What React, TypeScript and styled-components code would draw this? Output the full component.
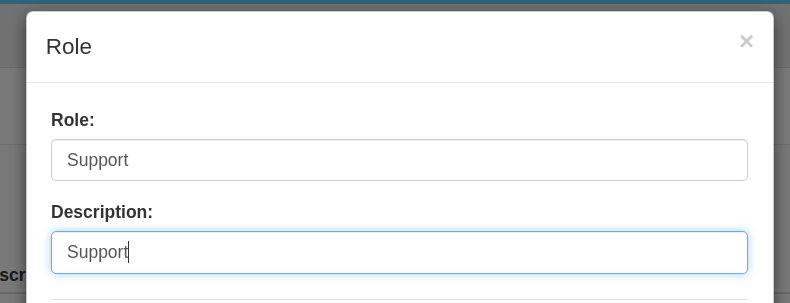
import React from 'react';
import styled, { createGlobalStyle } from 'styled-components';

// Bootstrap 3 look, rendered at 125% zoom
const theme = {
  text: '#333',
  border: '#ccc',
  focus: '#66afe9',
  rule: '#e5e5e5',
  font: '"Liberation Sans", Arial, Helvetica, sans-serif',
};

const GlobalStyle = createGlobalStyle`
  html, body {
    margin: 0;
    padding: 0;
    height: 303px;
    overflow: hidden;
    font-family: ${theme.font};
    color: ${theme.text};
    background: #f0f0f0;
  }
  * { box-sizing: border-box; }
`;

// Page behind the dialog
const Page = styled.div`
  min-height: 303px;
  background: #f0f0f0;
`;

const Navbar = styled.div`
  height: 4px;
  background: #5cc8ee;
`;

const PageHeader = styled.div`
  height: 64px;
  background: #e2e2e2;
  border-bottom: 1px solid #d0d0d0;
`;

const Toolbar = styled.div`
  height: 77px;
  border-bottom: 1px solid #d8d8d8;
  background: #f2f2f2;
`;

const Table = styled.div`
  padding-top: 112px;
`;

const HeadRow = styled.div`
  display: flex;
  height: 37px;
  border-bottom: 2px solid #d0d0d0;
  margin-left: -23px;
`;

const HeadCell = styled.div`
  font-size: 17.5px;
  font-weight: bold;
  line-height: 25px;
  padding-top: 6px;
`;

const Backdrop = styled.div`
  position: fixed;
  inset: 0;
  background: rgba(0, 0, 0, 0.5);
`;

const Dialog = styled.div`
  position: fixed;
  top: 11px;
  left: 26px;
  width: 748px;
  background: #fff;
  border: 1px solid rgba(0, 0, 0, 0.2);
  border-radius: 7px;
  box-shadow: 0 5px 15px rgba(0, 0, 0, 0.5);
`;

const Header = styled.div`
  display: flex;
  justify-content: space-between;
  align-items: flex-start;
  padding: 18.75px;
  border-bottom: 1px solid ${theme.rule};
`;

const Title = styled.h4`
  margin: 0;
  font-size: 22.5px;
  font-weight: normal;
  line-height: 32px;
  color: ${theme.text};
`;

const Close = styled.button`
  background: none;
  border: 0;
  padding: 0;
  margin-top: -3px;
  font-family: ${theme.font};
  font-size: 26px;
  font-weight: bold;
  line-height: 1;
  color: #000;
  opacity: 0.2;
  cursor: pointer;
`;

const Body = styled.div`
  padding: 25px 25px 25px 24px;
`;

const FormGroup = styled.div`
  margin-bottom: 18.75px;
`;

const Label = styled.label`
  display: block;
  font-size: 17.5px;
  font-weight: bold;
  line-height: 25px;
  margin-bottom: 6.25px;
`;

const Field = styled.div`
  position: relative;
`;

const Input = styled.input<{ $focused?: boolean }>`
  display: block;
  width: 100%;
  height: 42.5px;
  padding: 7.5px 15px;
  font-family: ${theme.font};
  font-size: 17.5px;
  line-height: 25px;
  color: #555;
  background: #fff;
  border: 1px solid ${(p) => (p.$focused ? theme.focus : theme.border)};
  border-radius: 5px;
  outline: 0;
  caret-color: transparent;
  box-shadow: ${(p) =>
    p.$focused
      ? 'inset 0 1px 1px rgba(0,0,0,.075), 0 0 8px rgba(102,175,233,.6)'
      : 'inset 0 1px 1px rgba(0,0,0,.075)'};
`;

// static text caret drawn over the focused field
const Caret = styled.span<{ $left: number }>`
  position: absolute;
  top: 10px;
  left: ${(p) => p.$left}px;
  width: 1px;
  height: 22px;
  background: #333;
`;

const Rule = styled.hr`
  margin: 25px 0 0;
  border: 0;
  border-top: 1px solid ${theme.rule};
`;

const App: React.FC = () => {
  return (
    <>
      <GlobalStyle />
      <Page>
        <Navbar />
        <PageHeader />
        <Toolbar />
        <Table>
          <HeadRow>
            <HeadCell>Description</HeadCell>
          </HeadRow>
        </Table>
      </Page>
      <Backdrop />
      <Dialog>
        <Header>
          <Title>Role</Title>
          <Close type="button">×</Close>
        </Header>
        <Body>
          <FormGroup>
            <Label>Role:</Label>
            <Field>
              <Input type="text" defaultValue="Support" />
            </Field>
          </FormGroup>
          <FormGroup>
            <Label>Description:</Label>
            <Field>
              <Input type="text" defaultValue="Support" $focused />
              <Caret $left={77} />
            </Field>
          </FormGroup>
          <Rule />
        </Body>
      </Dialog>
    </>
  );
};

export default App;
